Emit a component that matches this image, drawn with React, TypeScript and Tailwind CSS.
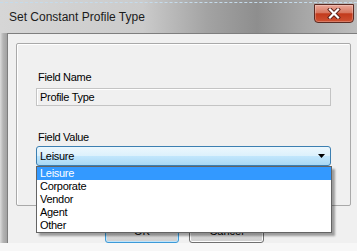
import React from "react";

const options = ["Leisure", "Corporate", "Vendor", "Agent", "Other"];

export default function App() {
    return (
        <div className="w-[357px] h-[251px] overflow-hidden bg-[#f7f7f7] flex flex-col font-['Liberation_Sans',Arial,sans-serif] text-[11px] text-black">
            {/* title bar */}
            <div className="h-[33px] pt-[2px] bg-[linear-gradient(90deg,#d6d6d6_0%,#cbcbcb_40%,#a3a3a3_58%,#8e8e8e_72%,#a6a6a6_85%,#bdbdbd_100%)]">
                <div className="h-[31px] border-t border-dashed border-[#c4dbeb] flex items-start justify-between">
                    <span className="mt-[7px] ml-[9px] text-[12px] leading-[14px] text-[#1b1b1b]">Set Constant Profile Type</span>
                    <div className="mt-[1px] mr-[3px] w-[40px] h-[19px] rounded-b-[4px] border border-[#5b2a22] bg-[linear-gradient(180deg,#eaa899_0%,#d77861_45%,#c23a1c_52%,#cf5233_100%)] flex items-center justify-center shadow-[inset_0_0_0_1px_rgba(255,255,255,0.25)]">
                        <svg width="14" height="11" viewBox="0 0 14 11">
                            <path d="M3 1.5 L11 9.5 M11 1.5 L3 9.5" stroke="#5a2018" strokeWidth="4" strokeLinecap="square" />
                            <path d="M3 1.5 L11 9.5 M11 1.5 L3 9.5" stroke="#ffffff" strokeWidth="2.2" strokeLinecap="square" />
                        </svg>
                    </div>
                </div>
            </div>

            {/* frame + client */}
            <div className="h-[210px] flex">
                <div className="w-[7px] bg-[linear-gradient(90deg,#dcdcdc_0%,#b4b4b4_45%,#a2a2a2_100%)]" />
                <div className="flex-1 border-l border-t border-[#7e7e7e] bg-[#f0f0f0] pl-[8px] pt-[9px]">
                    {/* group box */}
                    <div className="w-[335px] h-[163px] border border-[#a9a9a9] rounded-[2px] shadow-[inset_1px_1px_0_#ffffff] pl-[19px] pt-[27px]">
                        <p className="ml-[2px] h-[13px] leading-[13px] tracking-[-0.3px]">Field Name</p>
                        <div className="mt-[4px] w-[295px] h-[18px] border border-[#c4c4c4] bg-[#f0f0f0] shadow-[inset_1px_1px_0_#ffffff] pl-[3px] leading-[16px] tracking-[-0.3px]">
                            Profile Type
                        </div>

                        <p className="mt-[25px] ml-[2px] h-[13px] leading-[13px] tracking-[-0.3px]">Field Value</p>
                        <div className="mt-[2px] relative w-[295px]">
                            <div className="h-[20px] rounded-[3px] border border-[#3c7fb1] bg-[linear-gradient(180deg,#ecf7fd_0%,#dcf1fc_48%,#c1e6fc_52%,#a9d9f5_100%)] flex items-center justify-between pl-[3px] pr-[5px] tracking-[-0.3px]">
                                <span className="leading-[13px]">Leisure</span>
                                <svg width="7" height="4" viewBox="0 0 7 4">
                                    <path d="M0 0 H7 L3.5 4 Z" fill="#000" />
                                </svg>
                            </div>

                            {/* open list */}
                            <div className="absolute top-[20px] left-0 w-[296px] border border-[#646464] bg-white shadow-[3px_3px_2px_rgba(0,0,0,0.35)] z-10">
                                {options.map((opt, i) => (
                                    <div
                                        key={opt}
                                        className={
                                            i === 0
                                                ? "h-[13px] leading-[13px] pl-[3px] tracking-[-0.3px] bg-[#3399ff] text-white"
                                                : "h-[13px] leading-[13px] pl-[3px] tracking-[-0.3px]"
                                        }
                                    >
                                        {opt}
                                    </div>
                                ))}
                            </div>
                        </div>
                    </div>

                    {/* buttons (mostly behind the list) */}
                    <div className="mt-[14px] ml-[89px] flex gap-[10px]">
                        <button className="w-[74px] h-[23px] rounded-[3px] border border-[#3c9ad8] bg-[linear-gradient(180deg,#f2f2f2_0%,#ebebeb_48%,#dddddd_52%,#cfcfcf_100%)] shadow-[inset_0_0_0_1px_#bfe4fb]">
                            OK
                        </button>
                        <button className="w-[75px] h-[23px] rounded-[3px] border border-[#707070] bg-[linear-gradient(180deg,#f2f2f2_0%,#ebebeb_48%,#dddddd_52%,#cfcfcf_100%)] shadow-[inset_0_0_0_1px_#fcfcfc]">
                            Cancel
                        </button>
                    </div>
                </div>
            </div>
            <div className="h-[8px] bg-[#f7f7f7]" />
        </div>
    );
}
